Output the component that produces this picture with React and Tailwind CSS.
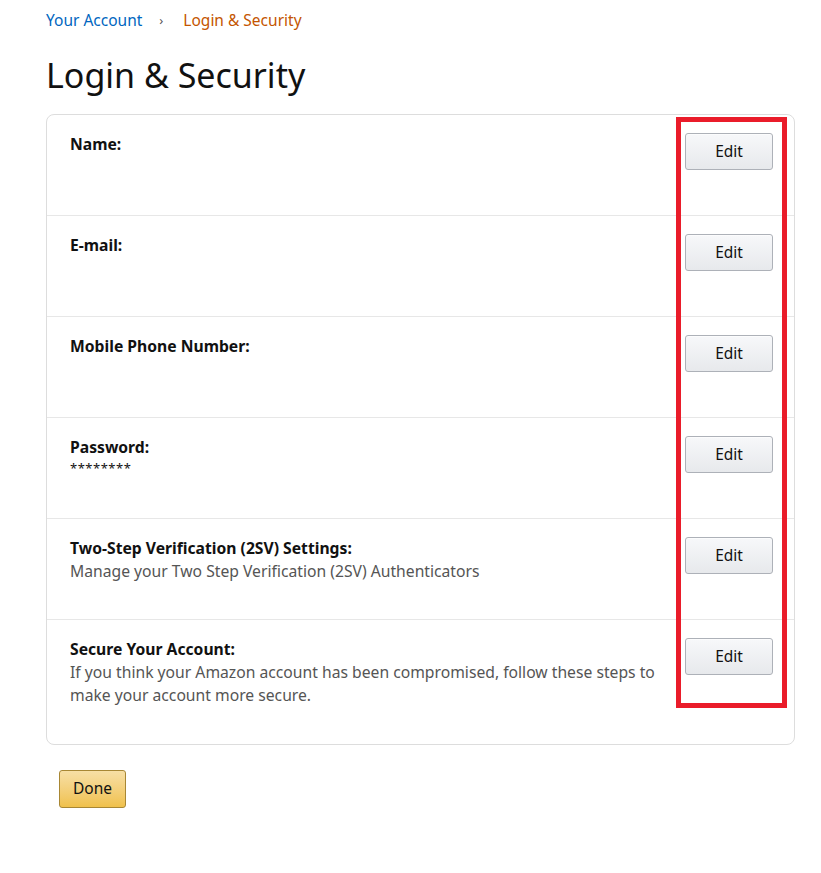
import React from 'react';

const rows = [
  { label: 'Name:' },
  { label: 'E-mail:' },
  { label: 'Mobile Phone Number:' },
  { label: 'Password:', value: '********' },
  { label: 'Two-Step Verification (2SV) Settings:', desc: 'Manage your Two Step Verification (2SV) Authenticators' },
  {
    label: 'Secure Your Account:',
    desc: 'If you think your Amazon account has been compromised, follow these steps to make your account more secure.',
    last: true,
  },
];

function EditButton() {
  return (
    <button className="w-[88px] h-[37px] shrink-0 rounded-[3px] border border-[#adb1b8] bg-gradient-to-b from-[#f7f8fa] to-[#e7e9ec] text-[15.5px] text-[#111] shadow-[inset_0_1px_0_rgba(255,255,255,0.6)]">
      Edit
    </button>
  );
}

export default function App() {
  return (
    <div className="min-h-[873px] bg-white text-[#111] font-['Noto_Sans',sans-serif]">
      <div className="pl-[46px] pr-[26px] pt-[8px]">
        {/* breadcrumb */}
        <div className="flex items-center text-[15.5px] leading-[24px]">
          <span className="text-[#0066c0]">Your Account</span>
          <span className="ml-[17px] mr-[20px] text-[#555] text-[13px]">›</span>
          <span className="text-[#c45500]">Login &amp; Security</span>
        </div>

        <h1 className="mt-[23px] text-[34px] leading-[41px] font-normal">Login &amp; Security</h1>

        <div className="relative mt-[18px] rounded-[8px] border border-[#ddd]">
          {rows.map((row, i) => (
            <div
              key={i}
              className={`flex justify-between gap-4 pl-[23px] pr-[21px] pt-[18px] ${
                row.last ? 'h-[124px]' : 'h-[101px] border-b border-[#e7e7e7]'
              }`}
            >
              <div className="text-[15.7px] leading-[23px]">
                <div className="font-bold">{row.label}</div>
                {row.value && <div className="text-[13px] leading-[18px] tracking-[0.5px]">{row.value}</div>}
                {row.desc && <div className="text-[#555] max-w-[600px]">{row.desc}</div>}
              </div>
              <EditButton />
            </div>
          ))}

          {/* highlight overlay */}
          <div className="absolute left-[629px] top-[2px] w-[111px] h-[591px] border-[5px] border-[#ea1c2a]" />
        </div>

        <button className="mt-[25px] ml-[13px] w-[67px] h-[38px] rounded-[3px] border border-[#a88734] bg-gradient-to-b from-[#f7dfa5] to-[#f0c14b] text-[15.5px] text-[#111]">
          Done
        </button>
      </div>
    </div>
  );
}
